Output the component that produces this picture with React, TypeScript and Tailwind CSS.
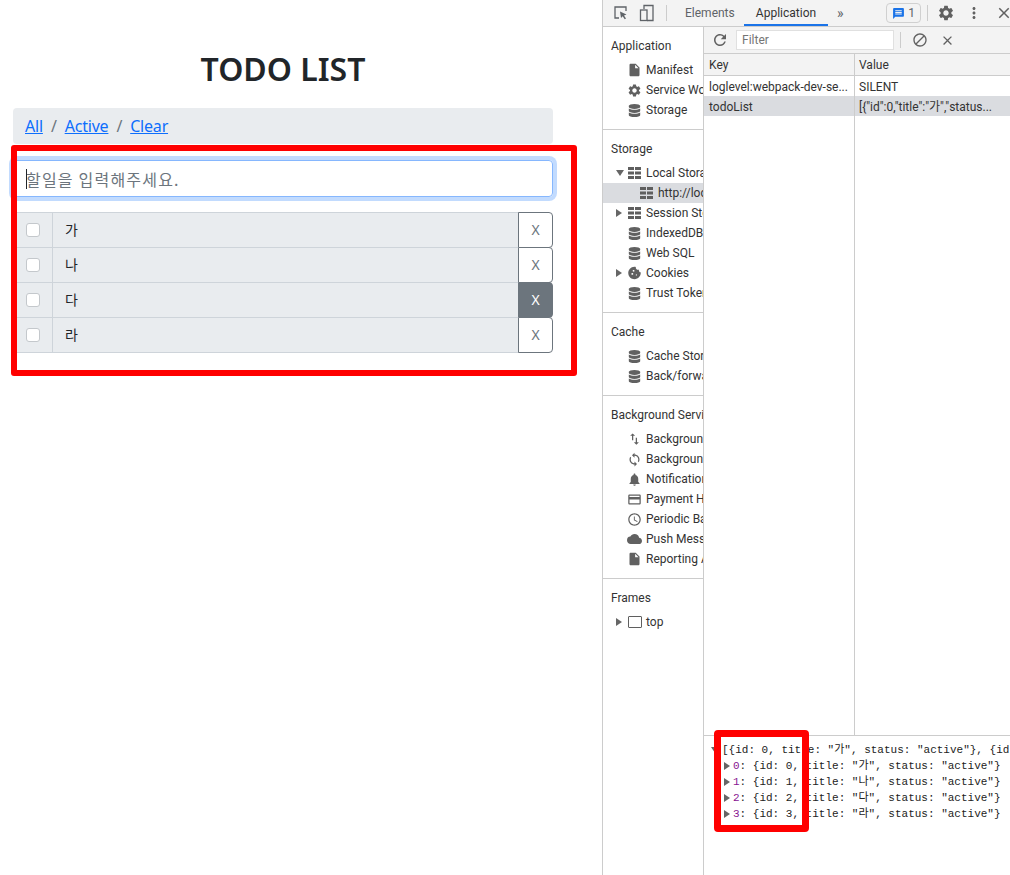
import type { ReactNode } from "react";
import { FaDatabase } from "react-icons/fa";
import {
  MdAccessTime,
  MdBlock,
  MdClose,
  MdCloud,
  MdCookie,
  MdCreditCard,
  MdInsertDriveFile,
  MdMessage,
  MdMoreVert,
  MdNotifications,
  MdRefresh,
  MdSettings,
  MdSwapVert,
  MdSync,
} from "react-icons/md";

const TODOS = [
  { title: "가", hover: false },
  { title: "나", hover: false },
  { title: "다", hover: true },
  { title: "라", hover: false },
];

const grey = "text-[#616161]";

function GridIcon() {
  return (
    <svg width="14" height="12" viewBox="0 0 14 12" className="text-[#5f5f5f]" fill="currentColor">
      <rect x="0" y="0" width="6" height="3" />
      <rect x="7" y="0" width="6" height="3" />
      <rect x="0" y="4.500" width="6" height="3" />
      <rect x="7" y="4.500" width="6" height="3" />
      <rect x="0" y="9" width="6" height="3" />
      <rect x="7" y="9" width="6" height="3" />
    </svg>
  );
}

function Caret({ open }: { open?: boolean }) {
  return (
    <span
      className={
        open
          ? "w-0 h-0 border-x-[4px] border-x-transparent border-t-[6px] border-t-[#666]"
          : "w-0 h-0 border-y-[4px] border-y-transparent border-l-[6px] border-l-[#666]"
      }
    />
  );
}

function SideRow({
  icon,
  label,
  caret,
  open,
  selected,
  indent,
}: {
  icon: ReactNode;
  label: string;
  caret?: boolean;
  open?: boolean;
  selected?: boolean;
  indent?: boolean;
}) {
  return (
    <div className={`flex items-center h-5 whitespace-nowrap overflow-hidden ${selected ? "bg-[#dadce0]" : ""}`}>
      <span className="w-[24px] pl-[13px] flex items-center shrink-0">{caret && <Caret open={open} />}</span>
      {indent && <span className="w-3 shrink-0" />}
      <span className="w-[15px] flex items-center justify-center shrink-0">{icon}</span>
      <span className="ml-[4px] text-[#333]">{label}</span>
    </div>
  );
}

function SideSection({ title, first, children }: { title: string; first?: boolean; children: ReactNode }) {
  return (
    <div className={`pt-[7px] pb-[9px] ${first ? "" : "border-t border-[#ccc]"}`}>
      <div className="h-6 pl-[8px] flex items-center text-[#333] whitespace-nowrap overflow-hidden">{title}</div>
      <div className="mt-[2px]">{children}</div>
    </div>
  );
}

function TodoPane() {
  return (
    <div className="w-[603px] h-full shrink-0 border-r border-[#ccc] bg-white font-['Noto_Sans','Noto_Sans_CJK_KR',sans-serif] text-[#212529]">
      <div className="w-[540px] ml-[13px]">
        <h1 className="pt-[45px] h-[108px] text-center text-[32px] leading-[48px] font-semibold">TODO LIST</h1>
        <nav className="h-[36px] rounded bg-[#e9ecef] px-3 flex items-center text-base tracking-[-0.2px]">
          <a className="text-[#0d6efd] underline">All</a>
          <span className="mx-2 text-[#6c757d]">/</span>
          <a className="text-[#0d6efd] underline">Active</a>
          <span className="mx-2 text-[#6c757d]">/</span>
          <a className="text-[#0d6efd] underline">Clear</a>
        </nav>
        <div className="relative mt-4">
          <input
            readOnly
            placeholder="할일을 입력해주세요."
            className="w-full h-[37px] px-3 rounded border border-[#86b7fe] shadow-[0_0_0_4px_rgba(13,110,253,0.25)] outline-none text-base tracking-[1.2px] placeholder:text-[#6c757d] font-['Noto_Sans_CJK_KR',sans-serif]"
          />
          <span className="absolute left-[13px] top-[9px] w-px h-[20px] bg-[#212529]" />
        </div>
        <ul className="mt-[15px]">
          {TODOS.map((todo, i) => (
            <li key={todo.title} className={`flex h-[36px] ${i > 0 ? "-mt-px" : ""}`}>
              <div className="w-[40px] shrink-0 flex items-center justify-center bg-[#e9ecef] border border-[#ced4da] rounded-l">
                <span className="w-[14px] h-[14px] rounded-[3px] bg-white border border-[#c4c8cc]" />
              </div>
              <div className="flex-1 -ml-px flex items-center pl-3 pb-[2px] bg-[#e9ecef] border border-[#ced4da] font-['Noto_Sans_CJK_KR',sans-serif] text-sm">
                {todo.title}
              </div>
              <button
                className={`w-[35px] -ml-px shrink-0 rounded-r border border-[#6c757d] text-sm ${
                  todo.hover ? "bg-[#6c757d] text-white" : "bg-white text-[#6c757d]"
                }`}
              >
                X
              </button>
            </li>
          ))}
        </ul>
      </div>
    </div>
  );
}

function Sidebar() {
  const db = <FaDatabase size={13} className={grey} />;
  const file = <MdInsertDriveFile size={18} className={grey} />;
  return (
    <aside className="w-[101px] shrink-0 border-r border-[#ccc] text-[12px] overflow-hidden">
      <SideSection title="Application" first>
        <SideRow icon={file} label="Manifest" />
        <SideRow icon={<MdSettings size={17} className={grey} />} label="Service Workers" />
        <SideRow icon={db} label="Storage" />
      </SideSection>
      <SideSection title="Storage">
        <SideRow icon={<GridIcon />} label="Local Storage" caret open />
        <SideRow icon={<GridIcon />} label="http://localhost:8080" selected indent />
        <SideRow icon={<GridIcon />} label="Session Storage" caret />
        <SideRow icon={db} label="IndexedDB" />
        <SideRow icon={db} label="Web SQL" />
        <SideRow icon={<MdCookie size={16} className={grey} />} label="Cookies" caret />
        <SideRow icon={db} label="Trust Tokens" />
      </SideSection>
      <SideSection title="Cache">
        <SideRow icon={db} label="Cache Storage" />
        <SideRow icon={db} label="Back/forward cache" />
      </SideSection>
      <SideSection title="Background Services">
        <SideRow icon={<MdSwapVert size={18} className={grey} />} label="Background Fetch" />
        <SideRow icon={<MdSync size={17} className={grey} />} label="Background Sync" />
        <SideRow icon={<MdNotifications size={17} className={grey} />} label="Notifications" />
        <SideRow icon={<MdCreditCard size={17} className={grey} />} label="Payment Handler" />
        <SideRow icon={<MdAccessTime size={17} className={grey} />} label="Periodic Background Sync" />
        <SideRow icon={<MdCloud size={16} className={grey} />} label="Push Messaging" />
        <SideRow icon={file} label="Reporting API" />
      </SideSection>
      <SideSection title="Frames">
        <SideRow
          icon={<span className="w-[14px] h-[12px] border-[1.5px] border-[#5f5f5f] rounded-[1px]" />}
          label="top"
          caret
        />
      </SideSection>
    </aside>
  );
}

function StorageTable() {
  return (
    <div className="flex-1 flex flex-col text-[12px] text-[#333] min-w-0">
      <div className="h-[27px] shrink-0 flex items-center border-b border-[#ccc] bg-[#f3f3f3]">
        <MdRefresh size={18} className={`ml-[7px] ${grey}`} />
        <div className="ml-[7px] w-[158px] h-[20px] bg-white border border-[#e0e0e0] pl-[5px] flex items-center text-[#757575]">
          Filter
        </div>
        <span className="ml-[6px] w-px h-[16px] bg-[#ccc]" />
        <MdBlock size={16} className={`ml-[11px] ${grey}`} />
        <MdClose size={15} className={`ml-[12px] ${grey}`} />
      </div>
      <div className="h-[22px] shrink-0 flex border-b border-[#ccc] bg-[#f3f3f3]">
        <div className="w-[151px] border-r border-[#ccc] pl-[5px] pt-px flex items-center">Key</div>
        <div className="flex-1 pl-[4px] pt-px flex items-center">Value</div>
      </div>
      <div className="h-5 shrink-0 flex">
        <div className="w-[151px] border-r border-[#ccc] pl-[5px] pt-px flex items-center whitespace-nowrap overflow-hidden">
          loglevel:webpack-dev-se...
        </div>
        <div className="flex-1 pl-[4px] pt-px flex items-center">SILENT</div>
      </div>
      <div className="h-5 shrink-0 flex bg-[#dadce0]">
        <div className="w-[151px] border-r border-[#ccc] pl-[5px] pt-px flex items-center">todoList</div>
        <div className="flex-1 pl-[4px] pt-px flex items-center whitespace-nowrap overflow-hidden">
          {'[{"id":0,"title":"가","status...'}
        </div>
      </div>
      <div className="flex-1 flex">
        <div className="w-[151px] border-r border-[#ccc]" />
      </div>
      <div className="h-[140px] shrink-0 border-t border-[#ccc] pt-[6px] font-['Liberation_Mono','Noto_Sans_CJK_KR',monospace] text-[11px] text-[#222] whitespace-nowrap overflow-hidden">
        <div className="h-4 flex items-center pl-[7px]">
          <Caret open />
          <span className="ml-[3px]">{'[{id: 0, title: "가", status: "active"}, {id: 1, title: "나"'}</span>
        </div>
        {["가", "나", "다", "라"].map((title, i) => (
          <div key={title} className="h-4 flex items-center pl-[20px]">
            <Caret />
            <span className="ml-[3px] text-[#881391]">{i}</span>
            <span>{`: {id: ${i}, title: "${title}", status: "active"}`}</span>
          </div>
        ))}
      </div>
    </div>
  );
}

function DevTools() {
  return (
    <div className="flex-1 min-w-0 h-full flex flex-col bg-white font-['Roboto','Noto_Sans_CJK_KR',sans-serif]">
      <header className="h-[27px] shrink-0 flex items-center bg-[#f3f3f3] border-b border-[#ccc] text-[12px] text-[#5f6368] whitespace-nowrap">
        <svg width="16" height="16" viewBox="0 0 16 16" fill="none" className="ml-[10px] shrink-0">
          <path d="M6 13H2V2h11v4" stroke="#5f6368" strokeWidth="1.300" />
          <path d="M7 6.500l6.500 3-2.500 1 2 3-1.300.8-2-3-1.700 1.700z" fill="#5f6368" />
        </svg>
        <svg width="16" height="18" viewBox="0 0 16 18" fill="none" className="ml-[10px] shrink-0">
          <path d="M5 5V1.500h9v15H8" stroke="#5f6368" strokeWidth="1.300" />
          <rect x="1.500" y="6" width="6.500" height="10.500" stroke="#5f6368" strokeWidth="1.300" />
        </svg>
        <span className="ml-[11px] w-px h-[16px] bg-[#ccc] shrink-0" />
        <span className="ml-[18px] w-[47px] shrink-0">Elements</span>
        <div className="ml-[12px] w-[84px] h-[26px] shrink-0 flex items-center justify-center border-b-2 border-[#1a73e8] text-[#333] pt-px">
          Application
        </div>
        <span className="ml-[9px] w-[10px] shrink-0 text-[14px] leading-none">»</span>
        <div className="ml-[39px] w-[35px] h-[20px] shrink-0 border border-[#d0d0d0] rounded-sm flex items-center justify-center gap-[3px]">
          <MdMessage size={13} className="text-[#1a73e8]" />
          <span>1</span>
        </div>
        <span className="ml-[6px] w-px h-[16px] bg-[#ccc] shrink-0" />
        <MdSettings size={18} className={`ml-[9px] shrink-0 ${grey}`} />
        <MdMoreVert size={18} className={`ml-[10px] shrink-0 ${grey}`} />
        <MdClose size={18} className={`ml-[12px] shrink-0 ${grey}`} />
      </header>
      <div className="flex-1 flex min-h-0">
        <Sidebar />
        <StorageTable />
      </div>
    </div>
  );
}

export default function App() {
  return (
    <div className="relative w-[1010px] h-[875px] flex overflow-hidden bg-white">
      <TodoPane />
      <DevTools />
      {/* red annotation boxes drawn on the screenshot */}
      <div className="absolute left-[11px] top-[145px] w-[566px] h-[231px] border-[6px] border-[#ff0000] rounded-[3px]" />
      <div className="absolute left-[714px] top-[730px] w-[95px] h-[102px] border-[7px] border-[#ff0000] rounded-[4px]" />
    </div>
  );
}
